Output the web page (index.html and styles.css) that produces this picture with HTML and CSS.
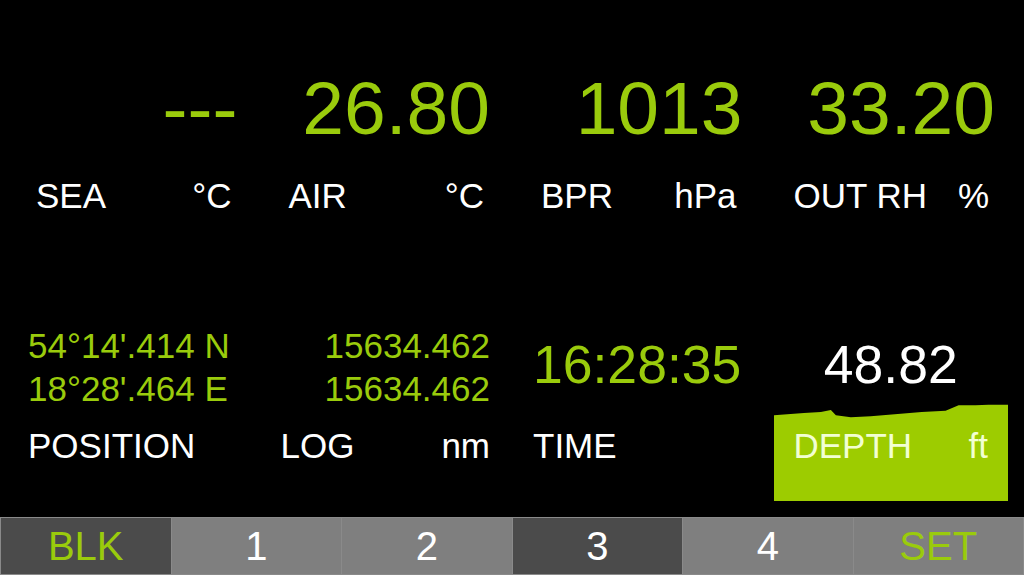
FILE: index.html
```html
<!DOCTYPE html>
<html lang="en">
<head>
    <meta charset="UTF-8">
    <title>Instruments</title>
    <link rel="stylesheet" href="styles.css">
</head>
<body>
<div class="screen">
    <div class="panel">
        <section class="row-top">
            <div class="cell">
                <div class="value">---</div>
                <div class="label-row"><span>SEA</span><span>°C</span></div>
            </div>
            <div class="cell">
                <div class="value">26.80</div>
                <div class="label-row"><span>AIR</span><span>°C</span></div>
            </div>
            <div class="cell">
                <div class="value">1013</div>
                <div class="label-row"><span>BPR</span><span>hPa</span></div>
            </div>
            <div class="cell">
                <div class="value">33.20</div>
                <div class="label-row"><span>OUT RH</span><span>%</span></div>
            </div>
        </section>

        <section class="row-bottom">
            <div class="position">
                <div>54°14'.414 N</div>
                <div>18°28'.464 E</div>
            </div>
            <div class="log">
                <div>15634.462</div>
                <div>15634.462</div>
            </div>
            <div class="time">16:28:35</div>
            <div class="depth-value">48.82</div>

            <div class="label pos-label">POSITION</div>
            <div class="label log-label"><span>LOG</span><span>nm</span></div>
            <div class="label time-label">TIME</div>
            <div class="depth-box">
                <svg class="depth-edge" viewBox="0 0 235 16" preserveAspectRatio="none">
                    <polygon points="0,11.3 30,9 47,8 57,6 62,11.3 77,13.3 97,12.3 115,10.7 148,8 172,6.7 185,1.3 202,1.3 215,0.7 235,0.7 235,16 0,16" fill="#9dcc00"/>
                </svg>
                <div class="label depth-label"><span>DEPTH</span><span>ft</span></div>
            </div>
        </section>
    </div>

    <nav class="tabs">
        <div class="tab dark green">BLK</div>
        <div class="tab">1</div>
        <div class="tab">2</div>
        <div class="tab dark">3</div>
        <div class="tab">4</div>
        <div class="tab green">SET</div>
    </nav>
</div>
</body>
</html>
```

FILE: styles.css
```css
body {
    margin: 0;
    background-color: #000;
    color: #fff;
    font-family: 'Liberation Sans', Arial, sans-serif;
    overflow: hidden;
}
.screen {
    width: 1024px;
    height: 575px;
    display: flex;
    flex-direction: column;
}
.panel {
    flex: 1;
    width: 1010px;
}
.row-top {
    display: grid;
    grid-template-columns: repeat(4, 1fr);
    padding-top: 68px;
}
.value {
    font-size: 75px;
    line-height: 80px;
    color: #9acb0c;
    text-align: right;
    padding-right: 15px;
}
.label-row {
    display: flex;
    justify-content: space-between;
    margin-top: 28px;
    padding: 0 21px 0 36px;
    font-size: 35px;
    line-height: 40px;
}
.row-bottom {
    display: grid;
    grid-template-columns: repeat(4, 1fr);
    grid-template-rows: 86px 91px;
    margin-top: 108px;
}
.position, .log {
    font-size: 35px;
    line-height: 43px;
    color: #9acb0c;
}
.position {
    padding-left: 28px;
}
.log {
    text-align: right;
    padding-right: 15px;
}
.time {
    font-size: 53.5px;
    line-height: 82px;
    color: #9acb0c;
    padding-left: 28px;
}
.depth-value {
    font-size: 53.5px;
    line-height: 82px;
    text-align: center;
    margin: 0 2px 0 16px;
}
.label {
    font-size: 35px;
    line-height: 40px;
}
.pos-label, .time-label {
    padding: 16px 0 0 28px;
}
.log-label {
    display: flex;
    justify-content: space-between;
    padding: 16px 15px 0 28px;
}
.depth-box {
    position: relative;
    margin: 9px 2px 0 16px;
    height: 82px;
    background-color: #9dcc00;
}
.depth-edge {
    position: absolute;
    left: 0;
    top: -15px;
    width: 100%;
    height: 16px;
    display: block;
}
.depth-label {
    display: flex;
    justify-content: space-between;
    padding: 7px 20px 0 20px;
    color: #f2ffd2;
}
.tabs {
    display: grid;
    grid-template-columns: repeat(6, 1fr);
    gap: 1px;
    padding: 1px;
    height: 58px;
    box-sizing: border-box;
    background-color: #8a8a8a;
}
.tab {
    background-color: #7f7f7f;
    color: #fff;
    font-size: 40px;
    line-height: 56px;
    text-align: center;
}
.tab.dark {
    background-color: #4b4b4b;
}
.tab.green {
    color: #9acb0c;
}
```
